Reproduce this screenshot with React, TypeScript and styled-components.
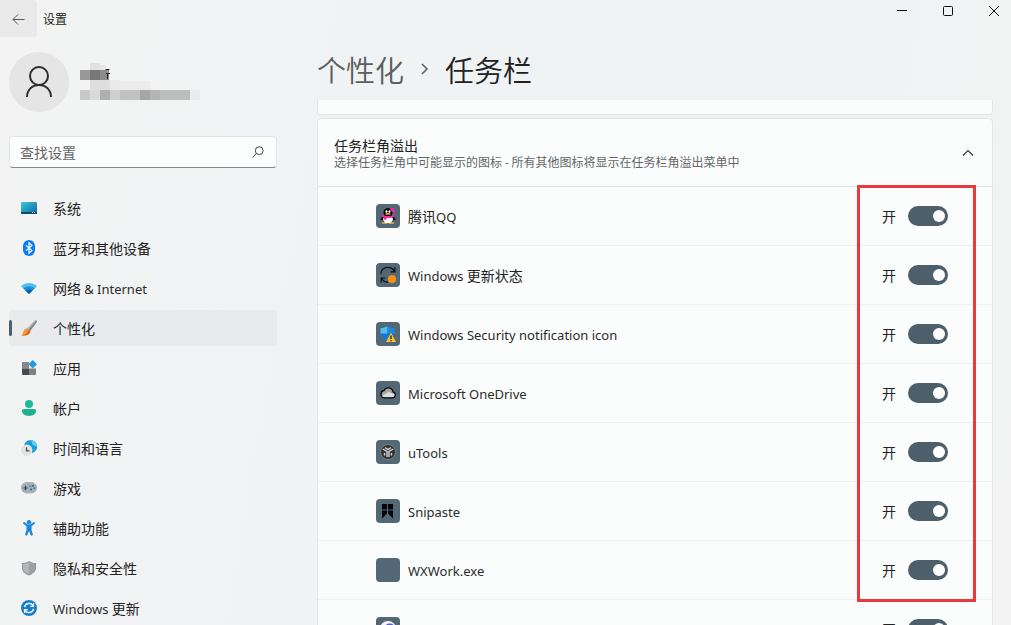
import React, { useState } from "react";
import styled, { createGlobalStyle } from "styled-components";

const latin = `"Noto Sans", "Open Sans", sans-serif`;
const cjk = `"Noto Sans CJK SC", "Noto Sans", sans-serif`;

const GlobalStyle = createGlobalStyle`
  * { box-sizing: border-box; }
  body { margin: 0; font-family: ${cjk}; font-size: 14px; line-height: 20px; font-weight: 400; color: #222; }
  button, input { font: inherit; color: inherit; }
  ul { list-style: none; margin: 0; padding: 0; }
`;

const Window = styled.div`
  position: relative;
  display: flex;
  flex-direction: column;
  height: 100vh;
  overflow: hidden;
  background: linear-gradient(100deg, #f3f3f3 0%, #f0f3f4 32%, #eff3f4 75%, #f3f3f3 100%);
`;

const TitleBar = styled.header`
  display: flex;
  align-items: flex-start;
  justify-content: space-between;
  height: 40px;
  flex: none;
`;

const TitleGroup = styled.div`
  display: flex;
  align-items: center;
  gap: 6px;
`;

const IconButton = styled.button`
  display: grid;
  place-items: center;
  border: 0;
  padding: 0;
  background: transparent;
`;

const BackButton = styled(IconButton)`
  width: 37px;
  height: 37px;
  border-radius: 0 4px 4px 0;
  background: #eae9e9;
`;

const AppName = styled.span`
  font-size: 12px;
`;

const Controls = styled.div`
  display: flex;
  gap: 12px;
`;

const ControlButton = styled(IconButton)`
  width: 34px;
  height: 22px;
`;

const Body = styled.div`
  display: flex;
  flex: 1;
  min-height: 0;
  gap: 40px;
`;

const Sidebar = styled.aside`
  flex: none;
  width: 277px;
  padding: 12px 0 0 9px;
`;

const Profile = styled.div`
  display: flex;
  gap: 11px;
  height: 60px;
`;

const Avatar = styled.div`
  display: grid;
  place-items: center;
  width: 60px;
  height: 60px;
  border-radius: 50%;
  background: #e5e5e5;
`;

const Search = styled.form`
  display: flex;
  align-items: center;
  height: 32px;
  margin: 24px 0 22px;
  padding: 0 5px 0 10px;
  border: 1px solid #e3e5e6;
  border-bottom-color: #868888;
  border-radius: 4px;
  background: #fcfdfd;
`;

const SearchInput = styled.input`
  flex: 1;
  min-width: 0;
  height: 20px;
  border: 0;
  padding: 0;
  outline: 0;
  background: transparent;
  &::placeholder { color: #636464; opacity: 1; }
`;

const SearchButton = styled(IconButton)`
  width: 26px;
  height: 28px;
`;

const NavList = styled.ul`
  display: flex;
  flex-direction: column;
  gap: 4px;
`;

const NavLink = styled.a<{ $active?: boolean }>`
  display: flex;
  align-items: center;
  gap: 16px;
  height: 36px;
  padding-right: 12px;
  border-radius: 4px;
  color: inherit;
  text-decoration: none;
  background: ${(p) => (p.$active ? "#e8eaeb" : "transparent")};
  &::before {
    content: "";
    width: 3px;
    height: 16px;
    border-radius: 2px;
    margin-right: -7px;
    background: ${(p) => (p.$active ? "#4c5f6b" : "transparent")};
  }
`;

const Latin = styled.span`
  font-family: ${latin};
  font-size: 13px;
  color: #2b2b2b;
`;

const Main = styled.main`
  display: flex;
  flex-direction: column;
  flex: 1;
  min-width: 0;
  padding-right: 18px;
`;

const Breadcrumb = styled.h1`
  display: flex;
  align-items: center;
  gap: 15px;
  flex: none;
  height: 60px;
  margin: 0;
  padding-bottom: 2px;
  font-size: 29px;
  line-height: 36px;
  font-weight: 350;
`;

const Parent = styled.a`
  color: #5b5d5e;
  text-decoration: none;
`;

const ScrollArea = styled.div`
  flex: 1;
  min-height: 0;
  overflow: hidden;
`;

const Card = styled.section`
  border: 1px solid #e3e6e7;
  border-radius: 4px;
  background: #fbfdfd;
`;

const PreviousCard = styled(Card)`
  height: 15px;
  margin-bottom: 3px;
  border-top: 0;
  border-radius: 0 0 4px 4px;
`;

const CardHeader = styled.div`
  display: flex;
  align-items: center;
  justify-content: space-between;
  height: 68px;
  padding: 0 12px 0 16px;
  border-bottom: 1px solid #e3e6e7;
`;

const CardTitle = styled.h2`
  margin: 0;
  font-size: 14px;
  line-height: 18px;
  font-weight: 400;
`;

const CardText = styled.p`
  margin: 0;
  font-size: 12px;
  line-height: 16px;
  color: #646667;
`;

const Row = styled.li`
  display: flex;
  align-items: center;
  height: 59px;
  padding: 0 44px 0 58px;
  border-bottom: 1px solid #eff1f2;
`;

const Tile = styled.span`
  display: grid;
  place-items: center;
  width: 24px;
  height: 24px;
  margin-right: 8px;
  border-radius: 4px;
  background: #536874;
`;

const RowLabel = styled.label`
  flex: 1;
`;

const State = styled.span`
  margin-right: 12px;
`;

const Switch = styled.input`
  appearance: none;
  display: flex;
  align-items: center;
  justify-content: flex-end;
  width: 40px;
  height: 20px;
  margin: 0;
  padding: 0 3px;
  border-radius: 10px;
  background: #4c5f6b;
  &::after {
    content: "";
    width: 12px;
    height: 12px;
    border-radius: 50%;
    background: #fff;
  }
  &:not(:checked) { justify-content: flex-start; background: #8b9499; }
`;

const Highlight = styled.div`
  position: absolute;
  top: 185px;
  right: 35px;
  width: 119px;
  height: 417px;
  border: 3px solid #e8393d;
  pointer-events: none;
`;

const mosaic: [number, number, number, number, string][] = [
  [10, 0, 10, 7, "#e2e2e2"], [20, 2, 6, 5, "#e6e6e6"],
  [0, 7, 10, 10, "#989898"], [10, 7, 10, 10, "#787878"], [20, 7, 9, 10, "#8c8c8c"],
  [10, 17, 20, 10, "#dedede"], [30, 17, 10, 10, "#e9e9e9"], [40, 18, 30, 9, "#ececec"],
  [0, 27, 10, 10, "#c9c9c9"], [10, 27, 10, 10, "#dadada"], [20, 27, 10, 10, "#b0b0b0"],
  [30, 27, 10, 10, "#cfcfcf"], [40, 27, 20, 10, "#c2c2c2"], [60, 27, 10, 10, "#a6a6a6"],
  [70, 27, 10, 10, "#b4b4b4"], [80, 27, 30, 10, "#bdbdbd"], [110, 27, 10, 10, "#ececec"],
];

const MaskedName = () => (
  <svg width="120" height="60" viewBox="0 -11 120 60" aria-hidden="true">
    {mosaic.map(([x, y, w, h, fill]) => (
      <rect key={`${x}-${y}`} x={x} y={y} width={w} height={h} fill={fill} />
    ))}
    <path d="M25.500 6.500h4M26 10.500h4M27.500 10v6" stroke="#222" fill="none" />
  </svg>
);

const navIcons: Record<string, React.ReactNode> = {
  system: (
    <>
      <defs><linearGradient id="sys" x1="0" y1="0" x2="1" y2="1"><stop stopColor="#3cc7dd" /><stop offset="1" stopColor="#0f659c" /></linearGradient></defs>
      <rect x="0" y="2" width="16" height="12" rx="1" fill="url(#sys)" />
      <path d="M0 12h16v1a1 1 0 0 1-1 1H1a1 1 0 0 1-1-1z" fill="#0c4a72" />
      <path d="M11 12.500h1M13 12.500h1" stroke="#b8e4f5" />
    </>
  ),
  bluetooth: (
    <>
      <rect x="2" y="0" width="12" height="16" rx="6" fill="#0a7bf0" />
      <path d="M5 5.300l6 5.200-3 2.700V2.800l3 2.700-6 5.200" fill="none" stroke="#fff" strokeWidth="1.100" />
    </>
  ),
  network: (
    <>
      <path d="M0 6.300C4.500 1.900 11.500 1.900 16 6.300L8 14z" fill="#4cc3ee" />
      <path d="M2.400 8.600c3.200-3 8-3 11.200 0L8 14z" fill="#1c8fd8" />
      <path d="M4.700 10.800c2-1.800 4.600-1.800 6.600 0L8 14z" fill="#0f5fb0" />
    </>
  ),
  brush: (
    <>
      <path d="M15.400.5c.8.6.4 1.600 0 2.200L9 11.200 6.200 8.700 13.500 1c.6-.6 1.300-.9 1.900-.5z" fill="#7c848b" />
      <path d="M15.400.5 7.500 9.800 6.200 8.700 13.500 1c.6-.6 1.300-.9 1.900-.5z" fill="#b3b9bd" />
      <path d="M6.200 8.300 9.200 11c.2 3.300-3.500 5-8.700 4.600C2.800 13.500 1.700 9 6.200 8.300z" fill="#f5962c" />
      <path d="M9.200 11c.2 3.300-3.500 5-8.700 4.600 3.500-.5 6-2 7-5.800z" fill="#dd641c" />
    </>
  ),
  apps: (
    <>
      <path d="M1 2h7v6.500H1z" fill="#85898e" />
      <path d="M1 8.500h7V15H2a1 1 0 0 1-1-1z" fill="#47494d" />
      <path d="M8 8.500h7V14a1 1 0 0 1-1 1H8z" fill="#7d8186" />
      <path d="M11.700 0 16 4.200 11.700 8.400 7.500 4.200z" fill="#2397e8" />
    </>
  ),
  account: (
    <>
      <circle cx="8" cy="4" r="4" fill="#22b99a" />
      <path d="M3 9h10c1.500 0 2 .8 2 1.800C15 14 12 16 8 16s-7-2-7-5.200C1 9.800 1.500 9 3 9z" fill="#1fb092" />
    </>
  ),
  time: (
    <>
      <circle cx="9.500" cy="6.700" r="6.600" fill="#1b9fdc" />
      <path d="M9 .2c3 1.500 1 3 3 4.500s3 1 4 2A6.600 6.600 0 0 0 9 .2z" fill="#5fd0ef" />
      <circle cx="5.700" cy="10.300" r="5.700" fill="#e0e2e3" />
      <path d="M5.500 7.300v3.500h3" fill="none" stroke="#4a4d50" strokeWidth="1.200" />
    </>
  ),
  game: (
    <>
      <rect x="0" y="2" width="16" height="11.500" rx="5.700" fill="#a5b1bb" />
      <path d="M2.300 8h4.400M4.500 5.800v4.400" stroke="#3c444b" strokeWidth="1.200" />
      <circle cx="12" cy="5.800" r="1" fill="#3c5a78" /><circle cx="10" cy="9.500" r="1" fill="#3c5a78" />
      <circle cx="13.300" cy="8.200" r="1" fill="#5b6f82" /><circle cx="9.300" cy="6.200" r="1" fill="#6b7a88" />
    </>
  ),
  access: (
    <>
      <circle cx="8" cy="2.200" r="2.200" fill="#1a86d9" />
      <path d="M3 3 6 5.400h4L13 3" fill="none" stroke="#1a86d9" strokeWidth="2" strokeLinecap="round" strokeLinejoin="round" />
      <path d="M5.500 5h5v5l1.500 5-1.900.8L8 11l-2.100 4.800L4 15l1.500-5z" fill="#1a86d9" />
    </>
  ),
  shield: (
    <>
      <path d="M8 1c2 1.400 4 2 7 2v4.500c0 4-3 6.500-7 8-4-1.500-7-4-7-8V3c3 0 5-.6 7-2z" fill="#8f9294" />
      <path d="M8 2.200c1.800 1.100 3.500 1.600 6 1.700v3.600c0 3.400-2.500 5.500-6 6.900-3.500-1.400-6-3.500-6-6.900V3.900c2.500-.1 4.200-.6 6-1.700z" fill="#b4b7b8" />
      <path d="M8 2.200c1.800 1.100 3.500 1.600 6 1.700v3.600c0 3.400-2.500 5.500-6 6.900z" fill="#9ea1a3" />
    </>
  ),
  update: (
    <>
      <circle cx="8" cy="8" r="8" fill="#1680d0" />
      <path d="M3.500 7.200A4.700 4.700 0 0 1 12 5.500M12.500 8.800A4.700 4.700 0 0 1 4 10.500" fill="none" stroke="#fff" strokeWidth="1.400" />
      <path d="M12.500 3v3.300H9.300M3.500 13V9.700h3.200" fill="none" stroke="#fff" strokeWidth="1.200" />
    </>
  ),
};

const nav: { icon: string; label: React.ReactNode; active?: boolean }[] = [
  { icon: "system", label: "系统" },
  { icon: "bluetooth", label: "蓝牙和其他设备" },
  { icon: "network", label: <>网络 <Latin>&amp; Internet</Latin></> },
  { icon: "brush", label: "个性化", active: true },
  { icon: "apps", label: "应用" },
  { icon: "account", label: "帐户" },
  { icon: "time", label: "时间和语言" },
  { icon: "game", label: "游戏" },
  { icon: "access", label: "辅助功能" },
  { icon: "shield", label: "隐私和安全性" },
  { icon: "update", label: <><Latin>Windows</Latin> 更新</> },
];

const rows: { id: string; label: React.ReactNode; art: React.ReactNode }[] = [
  {
    id: "qq",
    label: <>腾讯<Latin>QQ</Latin></>,
    art: (
      <>
        <ellipse cx="4.500" cy="15" rx="3" ry="1" fill="#e9a52c" />
        <ellipse cx="11.500" cy="15" rx="3" ry="1" fill="#e9a52c" />
        <path d="M2.500 8C.8 10 .2 11.500.6 12.500l2.400-1zM13.500 8c1.700 2 2.300 3.500 1.900 4.500l-2.400-1z" fill="#0b0b0b" />
        <ellipse cx="8" cy="10.500" rx="5.700" ry="4.900" fill="#0b0b0b" />
        <ellipse cx="8" cy="11.300" rx="4.900" ry="4" fill="#fff" />
        <ellipse cx="8" cy="4.300" rx="4.500" ry="4.300" fill="#0b0b0b" />
        <path d="M2.500 6.500c3 2.300 8 2.300 11 0l1 2c-2 1.300-4 1.500-6.300 1.500H6.500L6 12l-2.300-.4.200-2-2.500-1z" fill="#f227a8" />
        <path d="M9.500.6 14.500 0l-.5 2 1.500 2.500-3.500-.5z" fill="#f227a8" />
        <ellipse cx="6.500" cy="3.600" rx="1" ry="1.300" fill="#fff" /><ellipse cx="9.500" cy="3.600" rx="1" ry="1.300" fill="#fff" />
        <ellipse cx="8" cy="5.900" rx="2.600" ry=".9" fill="#f3b13a" />
      </>
    ),
  },
  {
    id: "update",
    label: <><Latin>Windows</Latin> 更新状态</>,
    art: (
      <>
        <path d="M.8 7A7.200 7.200 0 0 1 14.500 4.500M14.900.3v4.500h-4.400M1.200 15.500V11h4.300M1.500 11.300C2.800 14 5 15.200 8 15.200" fill="none" stroke="#0c0f11" strokeWidth="1.200" />
        <circle cx="12" cy="12" r="4" fill="#f7910f" />
      </>
    ),
  },
  {
    id: "security",
    label: <Latin>Windows Security notification icon</Latin>,
    art: (
      <>
        <path d="M7.500 0c2 1.600 4 2 7 2.200V7c0 4-3 6.500-7 8-4-1.500-7-4-7-8V2.200C3.500 2 5.500 1.600 7.500 0z" fill="#1479cf" />
        <path d="M7.500 0v7.500h-7V2.200C3.500 2 5.500 1.600 7.500 0z" fill="#56bdf0" />
        <path d="M7.500 7.500h7V2.200C11.500 2 9.500 1.600 7.500 0z" fill="#2388d6" />
        <path d="M11 7.500 15.500 16h-9z" fill="#fbc02b" stroke="#fbc02b" strokeLinejoin="round" />
        <path d="M11 9.500v3.500M11 14v1.300" stroke="#222" strokeWidth="1.300" />
      </>
    ),
  },
  {
    id: "onedrive",
    label: <Latin>Microsoft OneDrive</Latin>,
    art: (
      <>
        <path d="M4 12.800h8.500a3 3 0 0 0 .5-5.900C12.500 4 10.500 2.800 8.300 2.800c-2 0-3.400 1-4.200 2.700A3.700 3.700 0 0 0 4 12.800z" fill="#a6a6a6" stroke="#0c0c0c" strokeWidth="1.300" />
        <path d="M2 11 8.500 7l6 2.500c0 1.500-1 2.600-2 2.600H4c-.9 0-1.600-.4-2-1.100z" fill="#dedede" />
      </>
    ),
  },
  {
    id: "utools",
    label: <Latin>uTools</Latin>,
    art: (
      <>
        <circle cx="8" cy="8" r="7.500" fill="#303133" stroke="#8d9296" strokeWidth=".8" />
        <path d="M2.800 5 7 7.500V13M13.200 5 9 7.500V13M5 3.700 8 5.500l3-1.800M4.500 9v2.500M11.500 9v2.500" fill="none" stroke="#d7d8d8" strokeWidth="1.400" />
      </>
    ),
  },
  {
    id: "snipaste",
    label: <Latin>Snipaste</Latin>,
    art: <path d="M2 1h5v5.500H2zM8 1h5v5.500H8zM2 7.500h5v3L2 15.500zM8 7.500h5v8l-5-5z" fill="#050505" />,
  },
  { id: "wxwork", label: <Latin>WXWork.exe</Latin>, art: null },
  {
    id: "teams",
    label: <Latin>Microsoft Teams</Latin>,
    art: (
      <>
        <circle cx="8" cy="8" r="8" fill="#f4f5fb" />
        <path d="M6 4C8 2 12 2 14 4.500L12 9l-3-4z" fill="#5a63c4" />
      </>
    ),
  },
];

const Glyph = ({ children }: { children: React.ReactNode }) => (
  <svg width="16" height="16" viewBox="0 0 16 16" aria-hidden="true">{children}</svg>
);

const TraySetting = ({ id, label, art }: (typeof rows)[number]) => {
  const [on, setOn] = useState(true);
  return (
    <Row>
      <Tile><Glyph>{art}</Glyph></Tile>
      <RowLabel htmlFor={id}>{label}</RowLabel>
      <State>{on ? "开" : "关"}</State>
      <Switch id={id} type="checkbox" role="switch" checked={on} onChange={() => setOn(!on)} />
    </Row>
  );
};

export default function App() {
  return (
    <>
      <GlobalStyle />
      <Window>
        <TitleBar>
          <TitleGroup>
            <BackButton aria-label="返回">
              <svg width="14" height="12" viewBox="0 0 14 12" fill="none" stroke="#555"><path d="M12.500 6.500H1M6 1.500l-5 5 5 5" /></svg>
            </BackButton>
            <AppName>设置</AppName>
          </TitleGroup>
          <Controls>
            <ControlButton aria-label="最小化"><svg width="10" height="10"><path d="M0 4.500h10" stroke="#111" /></svg></ControlButton>
            <ControlButton aria-label="最大化"><svg width="10" height="10"><rect x=".5" y=".5" width="9" height="9" rx="1" fill="none" stroke="#111" /></svg></ControlButton>
            <ControlButton aria-label="关闭"><svg width="10" height="10"><path d="M0 0l10 10M10 0L0 10" stroke="#111" /></svg></ControlButton>
          </Controls>
        </TitleBar>
        <Body>
          <Sidebar>
            <Profile>
              <Avatar>
                <svg width="28" height="32" viewBox="0 0 28 32" fill="none" stroke="#2d2d2d" strokeWidth="2"><circle cx="14" cy="10" r="9" /><path d="M2 31c0-7 5-12 12-12s12 5 12 12" /></svg>
              </Avatar>
              <MaskedName />
            </Profile>
            <Search onSubmit={(e) => e.preventDefault()}>
              <SearchInput aria-label="查找设置" placeholder="查找设置" />
              <SearchButton aria-label="搜索">
                <svg width="12" height="12" viewBox="0 0 12 12" fill="none" stroke="#3f4142"><circle cx="7.200" cy="4.700" r="3.900" /><path d="M4.400 7.500.5 11.500" /></svg>
              </SearchButton>
            </Search>
            <nav>
              <NavList>
                {nav.map((n) => (
                  <li key={n.icon}>
                    <NavLink href="#" $active={n.active} aria-current={n.active ? "page" : undefined}>
                      <Glyph>{navIcons[n.icon]}</Glyph>
                      <span>{n.label}</span>
                    </NavLink>
                  </li>
                ))}
              </NavList>
            </nav>
          </Sidebar>
          <Main>
            <Breadcrumb>
              <Parent href="#">个性化</Parent>
              <svg width="11" height="12" viewBox="0 0 11 12" fill="none" stroke="#606263" strokeWidth="1.600"><path d="M3 1l5 5-5 5" /></svg>
              <span>任务栏</span>
            </Breadcrumb>
            <ScrollArea>
              <PreviousCard />
              <Card>
                <CardHeader>
                  <div>
                    <CardTitle>任务栏角溢出</CardTitle>
                    <CardText>选择任务栏角中可能显示的图标 - 所有其他图标将显示在任务栏角溢出菜单中</CardText>
                  </div>
                  <IconButton aria-label="折叠" aria-expanded="true">
                    <svg width="24" height="24" viewBox="0 0 24 24" fill="none" stroke="#3a3b3b" strokeWidth="1.200"><path d="M7 14.500l5-5 5 5" /></svg>
                  </IconButton>
                </CardHeader>
                <ul>
                  {rows.map((r) => <TraySetting key={r.id} {...r} />)}
                </ul>
              </Card>
            </ScrollArea>
          </Main>
        </Body>
        <Highlight />
      </Window>
    </>
  );
}
